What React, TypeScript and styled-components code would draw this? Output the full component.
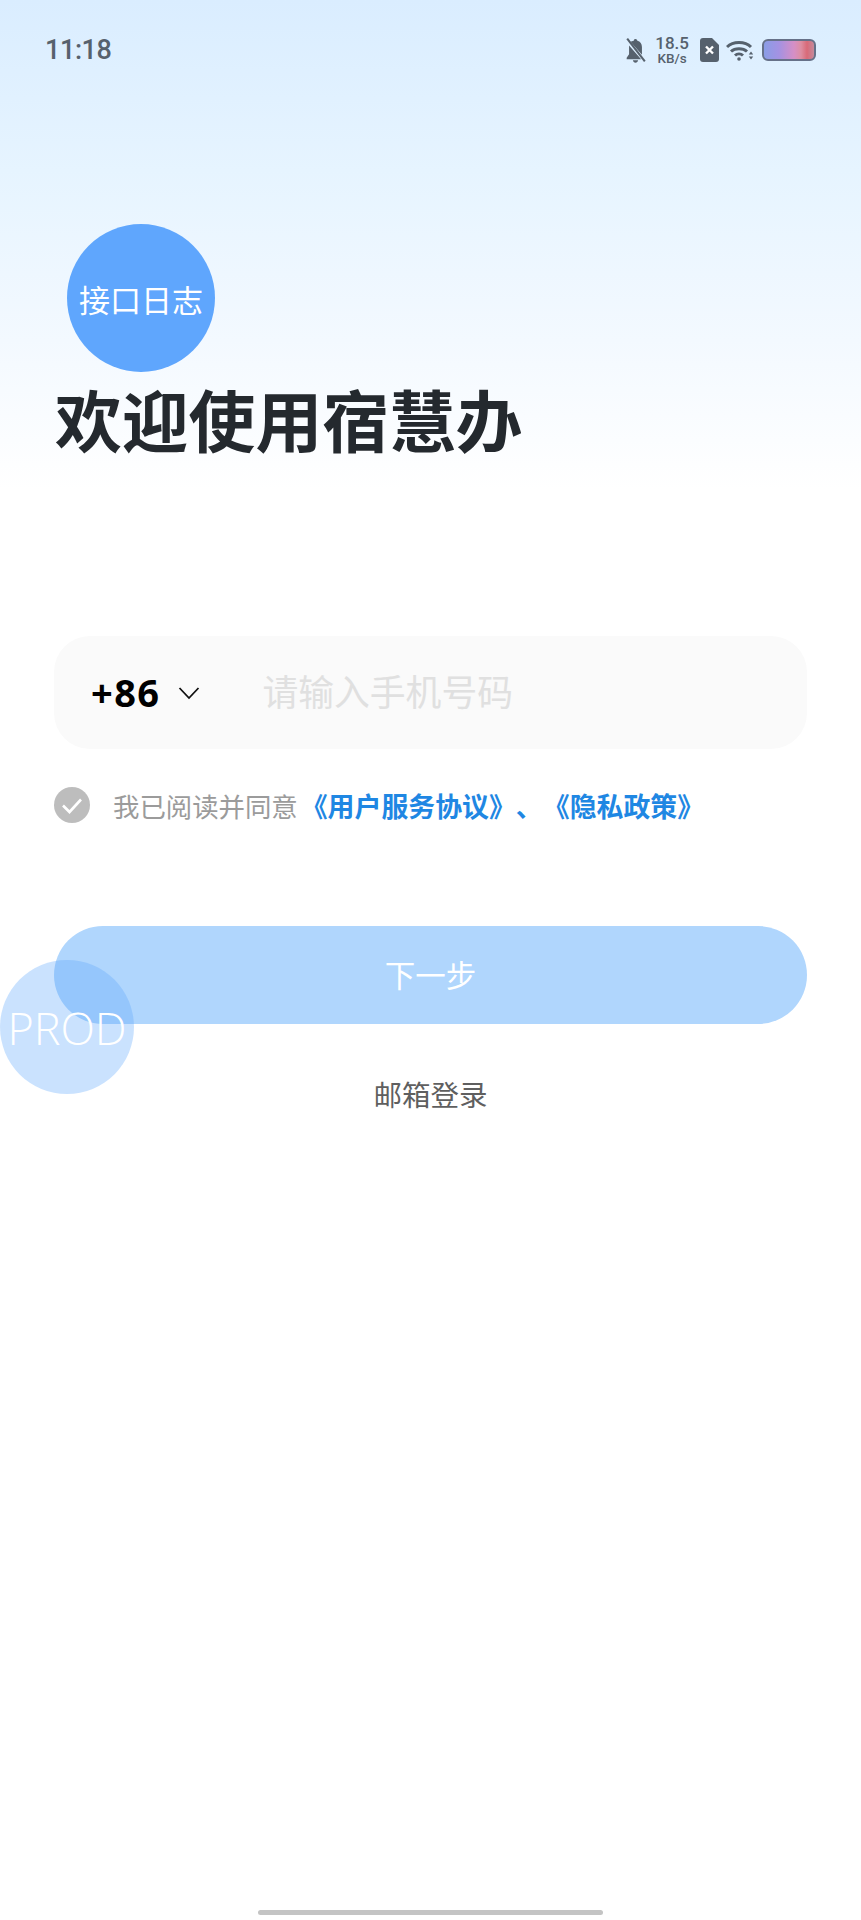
import styled, { createGlobalStyle } from 'styled-components';

const GlobalStyle = createGlobalStyle`
  html, body {
    margin: 0;
    padding: 0;
    background: #fff;
  }
  body {
    font-family: "Noto Sans CJK SC", "Noto Sans", sans-serif;
  }
`;

const Page = styled.div`
  position: relative;
  width: 861px;
  height: 1920px;
  overflow: hidden;
  display: flex;
  flex-direction: column;
  background: linear-gradient(180deg, #daedff 0px, #e6f4ff 170px, #f3f9ff 340px, #ffffff 490px);
`;

const StatusBar = styled.div`
  height: 100px;
  box-sizing: border-box;
  padding: 0 45px 0 45px;
  display: flex;
  align-items: center;
  justify-content: space-between;
  color: #56616d;
`;

const Clock = styled.span`
  font-family: "Roboto", sans-serif;
  font-size: 27px;
  font-weight: 500;
  letter-spacing: -0.4px;
`;

const StatusIcons = styled.div`
  display: flex;
  align-items: center;
`;

const Speed = styled.div`
  display: flex;
  flex-direction: column;
  align-items: center;
  margin: 0 11px 0 8px;
  font-family: "Roboto", sans-serif;
  font-weight: 500;
`;

const SpeedValue = styled.span`
  font-size: 17px;
  line-height: 15px;
`;

const SpeedUnit = styled.span`
  font-size: 13.5px;
  line-height: 14px;
`;

const WifiSlot = styled.div`
  display: flex;
  margin: 0 8px 0 7px;
`;

const Battery = styled.div`
  width: 54px;
  height: 22px;
  box-sizing: border-box;
  border: 2px solid #667189;
  border-radius: 6px;
  background: linear-gradient(90deg, #8a9de6 0%, #a492e2 30%, #d58fc6 60%, #dd8ea2 74%, #d96a78 86%, #c58a9c 100%);
`;

const Content = styled.main`
  flex: 1;
  display: flex;
  flex-direction: column;
  padding: 0 54px;
`;

const Title = styled.h1`
  margin: 273px 0 0 1px;
  font-size: 66.8px;
  line-height: 90px;
  font-weight: 700;
  color: #24292e;
  white-space: nowrap;
`;

const PhoneField = styled.div`
  margin-top: 173px;
  height: 113px;
  display: flex;
  align-items: center;
  padding-left: 37px;
  background: #fafafa;
  border-radius: 36px;
`;

const CountryCode = styled.span`
  padding-bottom: 2px;
  font-family: "Open Sans", sans-serif;
  font-size: 38px;
  font-weight: 700;
  letter-spacing: 1.4px;
  color: #000;
`;

const Chevron = styled.svg`
  margin-left: 18px;
  width: 22px;
  height: 14px;
`;

const Placeholder = styled.span`
  margin-left: 62px;
  padding-bottom: 6px;
  font-size: 35.8px;
  color: #e0e0e0;
`;

const AgreementRow = styled.div`
  margin-top: 38px;
  height: 36px;
  display: flex;
  align-items: center;
`;

const CheckCircle = styled.svg`
  width: 36px;
  height: 36px;
  flex: none;
`;

const AgreementText = styled.span`
  margin-left: 23px;
  font-size: 26.4px;
  color: #9b9b9b;
  white-space: nowrap;
  text-spacing-trim: space-all;
`;

const AgreementLink = styled.span`
  margin-left: 3px;
  font-size: 26.9px;
  color: #1f87e3;
  font-weight: 700;
`;

const NextButton = styled.button`
  margin-top: 103px;
  height: 98px;
  border: 0;
  padding: 0 0 2px;
  border-radius: 49px;
  background: #b0d6fd;
  color: #fff;
  font-family: inherit;
  font-size: 30.5px;
`;

const EmailLogin = styled.div`
  margin-top: 48px;
  text-align: center;
  font-size: 28.5px;
  line-height: 44px;
  color: #5f5f5f;
`;

const FloatingBubble = styled.div<{ $size: number; $left: number; $top: number; $bg: string; $fs: number }>`
  position: absolute;
  left: ${(p) => p.$left}px;
  top: ${(p) => p.$top}px;
  width: ${(p) => p.$size}px;
  height: ${(p) => p.$size}px;
  border-radius: 50%;
  background: ${(p) => p.$bg};
  color: #fff;
  font-size: ${(p) => p.$fs}px;
  display: flex;
  align-items: center;
  justify-content: center;
  white-space: nowrap;
`;

const ProdLabel = styled.span`
  font-family: "Open Sans", sans-serif;
  font-weight: 300;
  font-size: 45px;
`;

const HomeIndicator = styled.div`
  position: absolute;
  left: 258px;
  bottom: 5px;
  width: 345px;
  height: 5px;
  border-radius: 3px;
  background: #c4c4c4;
`;

const BellOff = () => (
  <svg width="23" height="27" viewBox="0 0 22 26" fill="#56616d">
    <path d="M9.300 3.500C9.500 2.600 10 2 11 2s1.600.7 1.800 1.600c2.800.7 4.400 3 4.400 6v7.400L6.200 4.600c.8-.5 1.900-.9 3.100-1.100zM4.800 8.200l11.600 13.300H2.500V20l2.300-3.400zM8.500 22.500h5c-.2 1.400-1.200 2.300-2.500 2.300s-2.300-.9-2.500-2.300z" />
    <path d="M3 1.500l17 22" stroke="#56616d" strokeWidth="2" fill="none" />
  </svg>
);

const SimMissing = () => (
  <svg width="19" height="24" viewBox="0 0 19 24">
    <path d="M3 0h9l7 7v14a3 3 0 0 1-3 3H3a3 3 0 0 1-3-3V3a3 3 0 0 1 3-3z" fill="#56616d" />
    <path d="M6 8.500l7 7M13 8.500l-7 7" stroke="#fff" strokeWidth="2.400" />
  </svg>
);

const Wifi = () => (
  <svg width="28" height="23" viewBox="0 0 28 22" fill="none" stroke="#56616d" strokeWidth="3">
    <path d="M1 7.500C7 1.500 19 1.500 25 7.500" />
    <path d="M5 12C9 8.300 17 8.300 21 12" />
    <path d="M9 16c2.200-2 5.800-2 8 0" />
    <circle cx="13" cy="19.500" r="1.800" fill="#56616d" stroke="none" />
    <path d="M25 12l2.200 3h-4.400zM25 20l-2.200-3h4.400z" fill="#56616d" stroke="none" />
  </svg>
);

const App = () => (
  <>
    <GlobalStyle />
    <Page>
      <StatusBar>
        <Clock>11:18</Clock>
        <StatusIcons>
          <BellOff />
          <Speed>
            <SpeedValue>18.5</SpeedValue>
            <SpeedUnit>KB/s</SpeedUnit>
          </Speed>
          <SimMissing />
          <WifiSlot>
            <Wifi />
          </WifiSlot>
          <Battery />
        </StatusIcons>
      </StatusBar>

      <Content>
        <Title>欢迎使用宿慧办</Title>

        <PhoneField>
          <CountryCode>+86</CountryCode>
          <Chevron viewBox="0 0 22 14" fill="none" stroke="#111" strokeWidth="1.800">
            <path d="M1.500 2l9.500 10L20.500 2" />
          </Chevron>
          <Placeholder>请输入手机号码</Placeholder>
        </PhoneField>

        <AgreementRow>
          <CheckCircle viewBox="0 0 36 36">
            <circle cx="18" cy="18" r="18" fill="#bdbdbd" />
            <path d="M9 18.500l6.500 6.500L27 12.500" fill="none" stroke="#fff" strokeWidth="2.600" />
          </CheckCircle>
          <AgreementText>
            我已阅读并同意
            <AgreementLink>《用户服务协议》、《隐私政策》</AgreementLink>
          </AgreementText>
        </AgreementRow>

        <NextButton>下一步</NextButton>
        <EmailLogin>邮箱登录</EmailLogin>
      </Content>

      <FloatingBubble $size={148} $left={67} $top={224} $bg="#5fa6fd" $fs={31}>
        接口日志
      </FloatingBubble>
      <FloatingBubble $size={134} $left={0} $top={960} $bg="rgba(95, 166, 253, 0.33)" $fs={44}>
        <ProdLabel>PROD</ProdLabel>
      </FloatingBubble>
      <HomeIndicator />
    </Page>
  </>
);

export default App;
